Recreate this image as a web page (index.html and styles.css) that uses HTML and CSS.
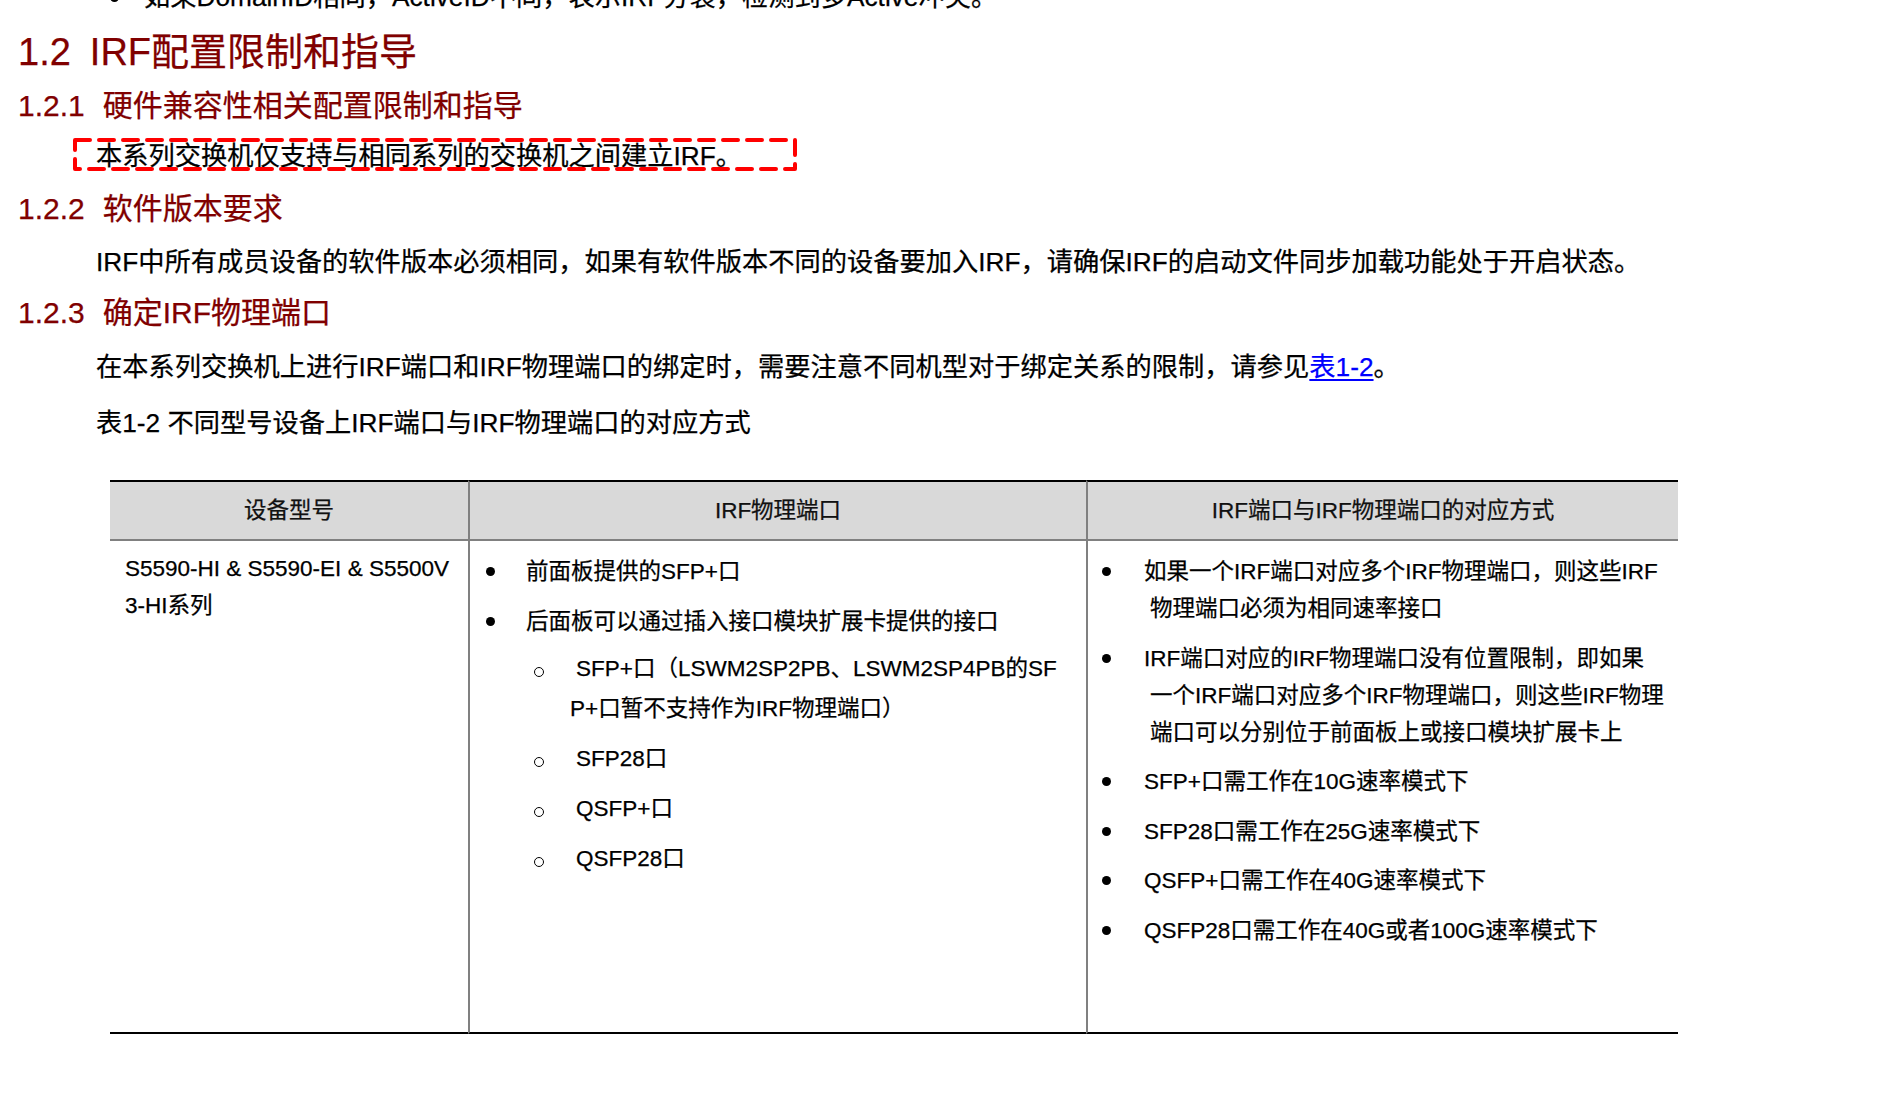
FILE: index.html
```html
<!DOCTYPE html>
<html lang="zh-CN">
<head>
<meta charset="utf-8">
<title>IRF配置限制和指导</title>
<link rel="stylesheet" href="styles.css">
</head>
<body>
<div class="page">
  <div class="prev-item"><span class="mk"><i class="dot"></i></span><span>如果DomainID相同，ActiveID不同，表示IRF分裂，检测到多Active冲突。</span></div>

  <h2 class="h2"><span class="num">1.2</span>IRF配置限制和指导</h2>

  <h3 class="h3 h3-first"><span class="num">1.2.1</span>硬件兼容性相关配置限制和指导</h3>
  <p class="para boxed">本系列交换机仅支持与相同系列的交换机之间建立IRF。<svg class="dash-box" width="724" height="33" viewBox="0 0 724 33"><rect x="2" y="2" width="720" height="29" fill="none" stroke="#ff0000" stroke-width="4" stroke-dasharray="15 9" stroke-linecap="round" stroke-linejoin="round"/></svg></p>

  <h3 class="h3 h3-next"><span class="num">1.2.2</span>软件版本要求</h3>
  <p class="para para-after-h3">IRF中所有成员设备的软件版本必须相同，如果有软件版本不同的设备要加入IRF，请确保IRF的启动文件同步加载功能处于开启状态。</p>

  <h3 class="h3 h3-next2"><span class="num">1.2.3</span>确定IRF物理端口</h3>
  <p class="para para-after-h3b">在本系列交换机上进行IRF端口和IRF物理端口的绑定时，需要注意不同机型对于绑定关系的限制，请参见<a class="xref" href="#t12">表1-2</a>。</p>

  <p class="para caption" id="t12">表1-2 不同型号设备上IRF端口与IRF物理端口的对应方式</p>

  <table class="irf-table">
    <colgroup>
      <col class="w1">
      <col class="w2">
      <col class="w3">
    </colgroup>
    <thead>
      <tr>
        <th>设备型号</th>
        <th class="div">IRF物理端口</th>
        <th class="div">IRF端口与IRF物理端口的对应方式</th>
      </tr>
    </thead>
    <tbody>
      <tr>
        <td><div class="cell cell-1">S5590-HI &amp; S5590-EI &amp; S5500V<br>3-HI系列</div></td>
        <td class="div">
          <div class="cell cell-2">
            <ul class="list">
              <li><span class="mk"><i class="dot"></i></span><span class="txt">前面板提供的SFP+口</span></li>
              <li><span class="mk"><i class="dot"></i></span><span class="txt">后面板可以通过插入接口模块扩展卡提供的接口</span></li>
            </ul>
            <ul class="sub">
              <li><span class="mk2"><i class="ring"></i></span><span class="txt2">SFP+口（LSWM2SP2PB、LSWM2SP4PB的SF<br>P+口暂不支持作为IRF物理端口）</span></li>
              <li><span class="mk2"><i class="ring"></i></span><span class="txt2">SFP28口</span></li>
              <li><span class="mk2"><i class="ring"></i></span><span class="txt2">QSFP+口</span></li>
              <li><span class="mk2"><i class="ring"></i></span><span class="txt2">QSFP28口</span></li>
            </ul>
          </div>
        </td>
        <td class="div">
          <div class="cell cell-3">
            <ul class="list list-3">
              <li><span class="mk"><i class="dot"></i></span><span class="txt">如果一个IRF端口对应多个IRF物理端口，则这些IRF<br>物理端口必须为相同速率接口</span></li>
              <li><span class="mk"><i class="dot"></i></span><span class="txt">IRF端口对应的IRF物理端口没有位置限制，即如果<br>一个IRF端口对应多个IRF物理端口，则这些IRF物理<br>端口可以分别位于前面板上或接口模块扩展卡上</span></li>
              <li><span class="mk"><i class="dot"></i></span><span class="txt">SFP+口需工作在10G速率模式下</span></li>
              <li><span class="mk"><i class="dot"></i></span><span class="txt">SFP28口需工作在25G速率模式下</span></li>
              <li><span class="mk"><i class="dot"></i></span><span class="txt">QSFP+口需工作在40G速率模式下</span></li>
              <li><span class="mk"><i class="dot"></i></span><span class="txt">QSFP28口需工作在40G或者100G速率模式下</span></li>
            </ul>
          </div>
        </td>
      </tr>
    </tbody>
  </table>
</div>
</body>
</html>
```

FILE: styles.css
```css
html, body {
  margin: 0;
  padding: 0;
  background: #ffffff;
}

body {
  font-family: "Liberation Sans", "Noto Sans CJK SC", sans-serif;
  color: #000000;
  overflow: hidden;
  -webkit-text-stroke: 0.25px currentColor;
}

.page {
  padding-left: 18px;
}

/* partially visible list item at the very top */
.prev-item {
  display: flex;
  margin-top: -23px;
  height: 40px;
  line-height: 40px;
  font-size: 26.25px;
  padding-left: 92px;
  white-space: nowrap;
}

.prev-item .mk {
  width: 34px;
  height: 40px;
}

.mk {
  flex: none;
  display: flex;
  align-items: center;
}

.dot {
  display: block;
  width: 9px;
  height: 9px;
  border-radius: 50%;
  background: #000000;
}

/* headings */
.h2 {
  margin: 10px 0 0;
  font-size: 38px;
  line-height: 50px;
  font-weight: normal;
  color: #800000;
  white-space: nowrap;
}

.h2 .num {
  margin-right: 19px;
}

.h3 {
  margin: 0;
  font-size: 30px;
  line-height: 40px;
  font-weight: normal;
  color: #800000;
  white-space: nowrap;
}

.h3 .num {
  margin-right: 18px;
}

.h3-first { margin-top: 9px; }
.h3-next { margin-top: 13px; }
.h3-next2 { margin-top: 11px; }

/* paragraphs */
.para {
  margin: 0;
  padding-left: 78px;
  font-size: 26.25px;
  line-height: 40px;
  white-space: nowrap;
}

.boxed {
  position: relative;
  margin-top: 10px;
}

.dash-box {
  position: absolute;
  left: 55px;
  top: 2px;
  overflow: visible;
}

.para-after-h3 { margin-top: 13px; }
.para-after-h3b { margin-top: 14px; }
.caption { margin-top: 16px; }

.xref {
  color: #0000ff;
  text-decoration: underline;
  text-underline-offset: 3px;
}

/* table */
.irf-table {
  margin-top: 37px;
  margin-left: 92px;
  width: 1568px;
  table-layout: fixed;
  border-collapse: separate;
  border-spacing: 0;
  font-size: 22.5px;
}

.w1 { width: 358px; }
.w2 { width: 618px; }
.w3 { width: 592px; }

.irf-table th {
  padding: 0;
  line-height: 57px;
  height: 57px;
  font-weight: normal;
  color: #111111;
  background: #d9d9d9;
  border-top: 2px solid #000000;
  border-bottom: 2px solid #808080;
  text-align: center;
  white-space: nowrap;
}

.irf-table td {
  padding: 0;
  vertical-align: top;
  border-bottom: 2px solid #000000;
}

.irf-table .div {
  border-left: 2px solid #808080;
}

.cell {
  box-sizing: border-box;
  height: 491px;
  padding-top: 12px;
  line-height: 37px;
  white-space: nowrap;
}

.cell-1 {
  padding-top: 9px;
  padding-left: 15px;
}

.cell-2 {
  padding-left: 16px;
}

.cell-3 {
  padding-left: 14px;
}

.list, .sub {
  list-style: none;
  margin: 0;
  padding: 0;
}

.list li, .sub li {
  display: flex;
  align-items: flex-start;
}

.list .mk {
  width: 40px;
  height: 37px;
}

.list li + li {
  margin-top: 12.5px;
}

.list-3 .mk {
  width: 48px;
}

.list-3 .txt {
  text-indent: -6px;
}

.sub {
  margin-top: 9px;
  margin-left: 49px;
  line-height: 40px;
}

.sub li + li {
  margin-top: 10px;
}

.mk2 {
  flex: none;
  width: 35px;
  height: 40px;
  display: flex;
  align-items: center;
}

.ring {
  display: block;
  width: 10px;
  height: 10px;
  margin-top: 6px;
  margin-left: -1px;
  box-sizing: border-box;
  border: 1.5px solid #000000;
  border-radius: 50%;
}

.txt2 {
  text-indent: 6px;
}
```
